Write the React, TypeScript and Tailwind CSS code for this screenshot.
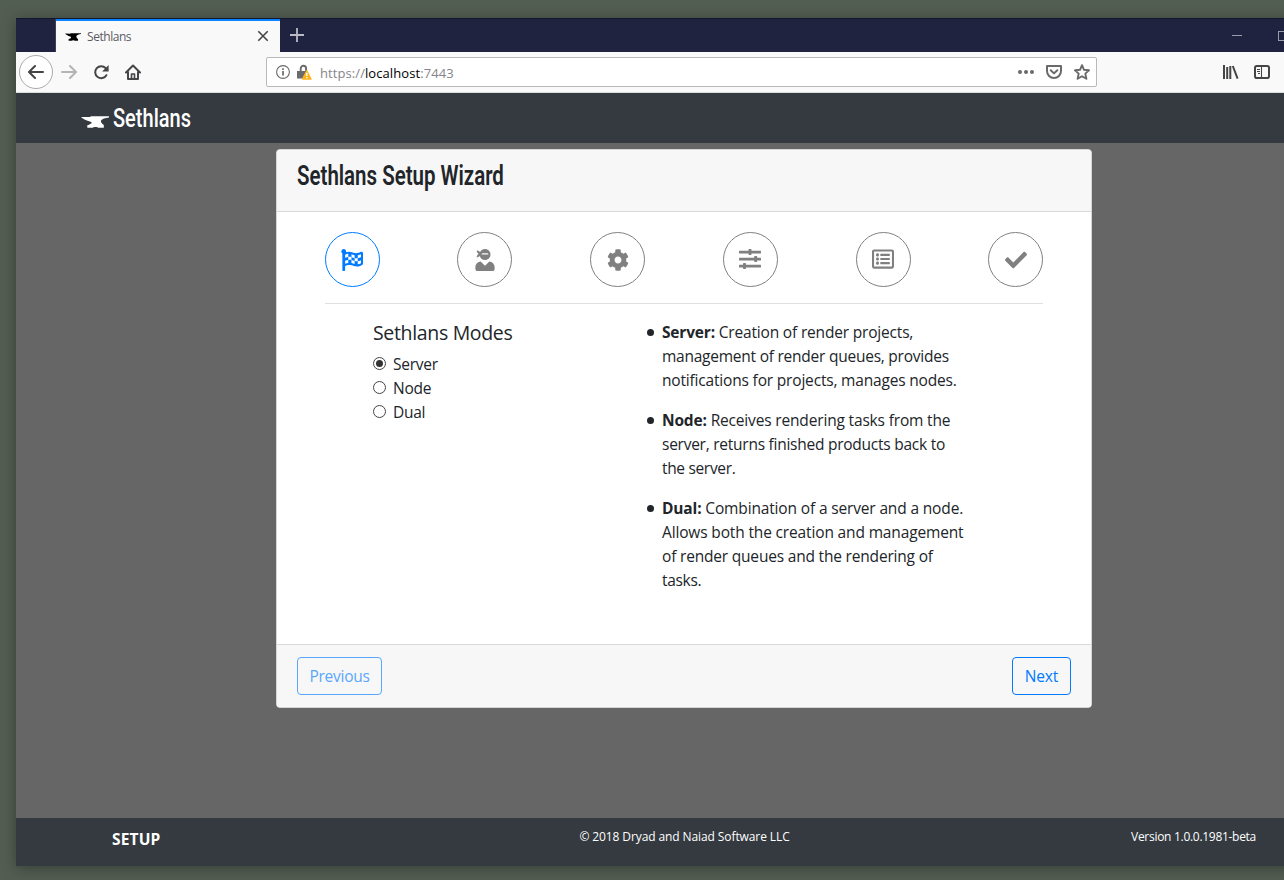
import { useState, type ReactNode } from "react";
import { FaCheck, FaCog, FaFlagCheckered, FaRegListAlt, FaUserNinja } from "react-icons/fa";

function Sliders({ className }: { className?: string }) {
  return (
    <svg viewBox="0 0 22 22" className={className} fill="currentColor">
      <rect y="2.700" width="22" height="2.700" rx=".5" />
      <rect y="9.700" width="22" height="2.700" rx=".5" />
      <rect y="16.700" width="22" height="2.700" rx=".5" />
      <rect x="9.500" y="1" width="3" height="6" rx=".7" />
      <rect x="15.200" y="8" width="3" height="6" rx=".7" />
      <rect x="4" y="15" width="3" height="6" rx=".7" />
    </svg>
  );
}

const steps = [
  { Icon: FaFlagCheckered, look: "border-[#007bff] pr-px text-[#007bff]" },
  { Icon: FaUserNinja, look: "ml-[77px] border-[#808080] text-[#808080]" },
  { Icon: FaCog, look: "ml-[78px] border-[#808080] text-[#808080]" },
  { Icon: Sliders, look: "ml-[78px] border-[#808080] pr-px pb-px text-[#808080]" },
  { Icon: FaRegListAlt, look: "ml-[78px] border-[#808080] pr-px pb-[2px] text-[#808080]" },
  { Icon: FaCheck, look: "ml-[77px] border-[#808080] pl-px text-[#808080]" },
];
const modes = ["Server", "Node", "Dual"];

function Anvil({ className }: { className: string }) {
  return (
    <svg viewBox="0 0 28 12" className={className} fill="currentColor" preserveAspectRatio="none">
      <path d="M0 .9 9.500 1V.3H28v1.100c-3.800.4-7 1.300-8 3.200-.4 1.800 1 3.600 2.800 4.300V11.700h-5.500c-.4-.4-1.300-.7-2.800-.7s-2.400.3-2.900.7H6.300V9.200c2.300-.7 4.300-1.500 4.300-2.500 0-.7-.7-1.100-1.700-1.300C5.800 4.700 2 3 0 .9Z" />
    </svg>
  );
}

function Line({ className = "", children }: { className?: string; children: ReactNode }) {
  return <span className={`block whitespace-nowrap ${className}`}>{children}</span>;
}

function Item({ children }: { children: ReactNode }) {
  return (
    <li className="flex">
      <span className="mt-[9px] mr-2 h-[7px] w-[7px] shrink-0 rounded-full bg-[#212529]" />
      <div>{children}</div>
    </li>
  );
}

function TitleBar() {
  return (
    <div className="flex h-[34px] shrink-0 border-t border-[#15182b] bg-[#20233f]">
      <div className="w-10 border-r border-[#3c3f57]" />
      <div className="flex w-56 items-center border-t-2 border-[#0a84ff] bg-[#f9f9fa] pr-[11px] pb-px pl-[9px]">
        <Anvil className="mt-px h-2 w-4 text-black" />
        <span className="mt-px ml-[6px] text-xs tracking-[-0.45px] text-[#5a5a62]">Sethlans</span>
        <svg viewBox="0 0 12 12" className="ml-auto h-3 w-3 text-[#454545]" stroke="currentColor" strokeWidth="1.6" fill="none">
          <path d="m1.300 1.300 9.400 9.400m0-9.400-9.400 9.400" />
        </svg>
      </div>
      <svg viewBox="0 0 14 14" className="mt-[9px] ml-[10px] h-3.5 w-3.5" stroke="#b9bac4" strokeWidth="1.800" fill="none">
        <path d="M7 0v14M0 7h14" />
      </svg>
      <div className="mt-4 ml-[928px] h-px w-2.5 shrink-0 bg-[#9a9bab]" />
      <div className="mt-3 ml-9 h-2.5 w-2.5 shrink-0 border border-[#9a9bab]" />
    </div>
  );
}

function Toolbar() {
  return (
    <div className="flex h-[41px] shrink-0 items-center border-b border-[#dcdcdd] bg-[#f9f9fa] text-[#454547]">
      <div className="ml-[3px] flex h-[34px] w-[34px] items-center justify-center rounded-full border border-[#aaaaab] bg-white">
        <svg viewBox="0 0 16 16" className="h-4 w-4" fill="none" stroke="currentColor" strokeWidth="2" strokeLinecap="round" strokeLinejoin="round">
          <path d="M15 8H1.500M7 2 1 8l6 6" />
        </svg>
      </div>
      <svg viewBox="0 0 16 16" className="ml-2 h-4 w-4 text-[#b4b4b5]" fill="none" stroke="currentColor" strokeWidth="2" strokeLinecap="round" strokeLinejoin="round">
        <path d="M1 8h13.500M9 2l6 6-6 6" />
      </svg>
      <svg viewBox="0 0 16 16" className="ml-4 h-4 w-4" fill="none" stroke="currentColor" strokeWidth="2" strokeLinecap="round">
        <path d="M13.400 11.200A6 6 0 1 1 12.700 4.200" />
        <path d="M15.600 1v6.500H9.100Z" fill="currentColor" stroke="none" />
      </svg>
      <svg viewBox="0 0 16 16" className="ml-4 h-4 w-4" fill="none" stroke="currentColor" strokeWidth="2" strokeLinecap="round" strokeLinejoin="round">
        <path d="M1 8.500 8 1.500l7 7M3 8v7h10V8" />
        <path d="M6.500 15v-5h3v5" strokeWidth="1.600" />
      </svg>
      <div className="ml-[125px] flex h-[30px] w-[831px] items-center rounded-[2px] border border-[#b9b9ba] bg-white pr-[6px] pl-[9px] text-[#6a6a6b]">
        <svg viewBox="0 0 14 14" className="h-3.5 w-3.5" fill="none" stroke="currentColor">
          <circle cx="7" cy="7" r="6.400" strokeWidth="1.100" />
          <path d="M7 6v4.500M7 3.300v1.600" strokeWidth="1.700" />
        </svg>
        <svg viewBox="0 0 15 16" className="ml-[7px] h-4 w-[15px]">
          <path d="M3.700 7V4.500a2.700 2.700 0 0 1 5.400 0V7" fill="none" stroke="#6a6a6b" strokeWidth="1.900" />
          <path d="M0 7h9.500l-4 7.500H0Z" fill="#6a6a6b" />
          <path d="M9.800 6.300 14.300 15.200H5.300Z" fill="#ffb119" stroke="#ffb119" strokeWidth=".9" strokeLinejoin="round" />
          <path d="M9.800 8.800v3.200M9.800 13v1.300" stroke="white" strokeWidth="1.400" />
        </svg>
        <span className="mt-[3px] ml-2 text-[13px] tracking-[0.080px] text-[#85858a]">
          https://<span className="text-black">localhost</span>:7443
        </span>
        <svg viewBox="0 0 16 4" className="ml-auto h-1 w-4" fill="currentColor">
          <circle cx="2" cy="2" r="2" /><circle cx="8" cy="2" r="2" /><circle cx="14" cy="2" r="2" />
        </svg>
        <svg viewBox="0 0 16 14" className="ml-3 h-3.5 w-4" fill="none" stroke="currentColor" strokeWidth="2" strokeLinejoin="round" strokeLinecap="round">
          <path d="M1 1h14v5a7 7 0 0 1-14 0Z" />
          <path d="m4.700 5.200 3.300 3.200 3.300-3.200" />
        </svg>
        <svg viewBox="0 0 16 16" className="ml-3 h-4 w-4" fill="none" stroke="currentColor" strokeWidth="1.900" strokeLinejoin="round">
          <path d="m8 1.200 2 4.600 5 .5-3.700 3.300 1.100 5.200L8 12.200l-4.400 2.600 1.100-5.200L1 6.300l5-.5Z" />
        </svg>
      </div>
      <svg viewBox="0 0 16 14" className="ml-[126px] h-3.5 w-4 shrink-0" fill="none" stroke="currentColor" strokeWidth="2">
        <path d="M1 0v14M4.200 2v12M7.300 1v13M9.800 1l4.800 12.600" />
      </svg>
      <svg viewBox="0 0 16 14" className="ml-[15px] h-3.5 w-4 shrink-0" fill="none" stroke="currentColor">
        <rect x="1" y="1" width="14" height="12" rx="1.800" strokeWidth="2" />
        <path d="M7.500 1v12M3 4.500h3M3 6.500h3M4 8.500h2" strokeWidth="1.100" />
      </svg>
    </div>
  );
}

export default function App() {
  const [mode, setMode] = useState("Server");
  return (
    <div className="h-[880px] w-full overflow-hidden bg-[#535e53] pt-[18px] pl-4 font-['Open_Sans','Noto_Sans',sans-serif] text-[#212529]">
      <div className="flex h-[848px] w-[1300px] flex-col shadow-[0_2px_14px_rgba(0,0,0,0.35)]">
        <TitleBar />
        <Toolbar />
        <nav className="flex h-[50px] shrink-0 items-center bg-[#343a40] pl-[65px] text-white">
          <Anvil className="mt-[7px] h-3 w-7" />
          <span className="ml-1 origin-left scale-x-[0.77] font-[Roboto] text-[26px] leading-none font-medium whitespace-nowrap">Sethlans</span>
        </nav>
        <main className="flex-1 bg-[#666] pt-[6px] pl-[260px]">
          <section className="flex h-[559px] w-[816px] flex-col overflow-hidden rounded-[4px] border border-[#d5d5d5] bg-white">
            <header className="h-[62px] shrink-0 border-b border-[#d9d9d9] bg-[#f7f7f7] pt-2.5 pl-5">
              <h1 className="origin-left scale-x-[0.758] font-[Roboto] text-[27px] leading-8 font-semibold whitespace-nowrap">Sethlans Setup Wizard</h1>
            </header>
            <div className="flex-1 px-12 pt-5">
              <div className="flex border-b border-[#dedfe0] pb-4">
                {steps.map(({ Icon, look }, i) => (
                  <div key={i} className={`flex h-[55px] w-[55px] shrink-0 items-center justify-center rounded-full border ${look}`}>
                    <Icon className="h-[22px] w-[22px]" />
                  </div>
                ))}
              </div>
              <div className="flex pt-4 pl-12">
                <div className="w-[274px]">
                  <h2 className="mb-[6px] text-[19.500px] leading-[26px] tracking-[-0.33px]">Sethlans Modes</h2>
                  {modes.map((m) => (
                    <label key={m} className="flex h-6 items-center text-[15.500px] tracking-[-0.25px]">
                      <input type="radio" name="mode" className="peer sr-only" checked={mode === m} onChange={() => setMode(m)} />
                      <span className="mr-[7px] mb-[2px] flex h-[13px] w-[13px] items-center justify-center rounded-full border border-[#444] bg-white">
                        {mode === m && <span className="h-[7px] w-[7px] rounded-full bg-[#333]" />}
                      </span>
                      <span className="pt-[2px]">{m}</span>
                    </label>
                  ))}
                </div>
                <ul className="space-y-4 text-[15.500px] leading-6">
                  <Item>
                    <Line className="tracking-[-0.18px]"><b>Server:</b> Creation of render projects,</Line>
                    <Line className="tracking-[-0.24px]">management of render queues, provides</Line>
                    <Line className="tracking-[-0.18px]">notifications for projects, manages nodes.</Line>
                  </Item>
                  <Item>
                    <Line className="tracking-[-0.165px]"><b>Node:</b> Receives rendering tasks from the</Line>
                    <Line className="tracking-[-0.250px]">server, returns finished products back to</Line>
                    <Line className="tracking-[-0.33px]">the server.</Line>
                  </Item>
                  <Item>
                    <Line className="tracking-[-0.150px]"><b>Dual:</b> Combination of a server and a node.</Line>
                    <Line className="tracking-[-0.150px]">Allows both the creation and management</Line>
                    <Line className="tracking-[-0.19px]">of render queues and the rendering of</Line>
                    <Line className="tracking-[-0.3px]">tasks.</Line>
                  </Item>
                </ul>
              </div>
            </div>
            <footer className="flex h-[63px] shrink-0 items-start justify-between border-t border-[#d9d9d9] bg-[#f7f7f7] px-5 pt-3">
              <button className="h-[38px] w-[85px] rounded-[4px] border border-[#59a7fd] pt-px text-[15.500px] tracking-[-0.25px] text-[#59a7fd]">Previous</button>
              <button className="h-[38px] w-[59px] rounded-[4px] border border-[#007bff] pt-px text-[15.500px] tracking-[-0.1px] text-[#007bff]">Next</button>
            </footer>
          </section>
        </main>
        <footer className="flex h-12 shrink-0 bg-[#343a40] text-white">
          <div className="w-[467px] pt-[9px] pl-24 text-[15.500px] leading-6 font-bold tracking-[0.15px]">SETUP</div>
          <div className="w-[403px] pt-2 text-center text-xs leading-[22px] tracking-[-0.1px]">© 2018 Dryad and Naiad Software LLC</div>
          <div className="w-[370px] pt-2 text-right text-xs leading-[22px] tracking-[-0.29px]">Version 1.0.0.1981-beta</div>
        </footer>
      </div>
    </div>
  );
}
